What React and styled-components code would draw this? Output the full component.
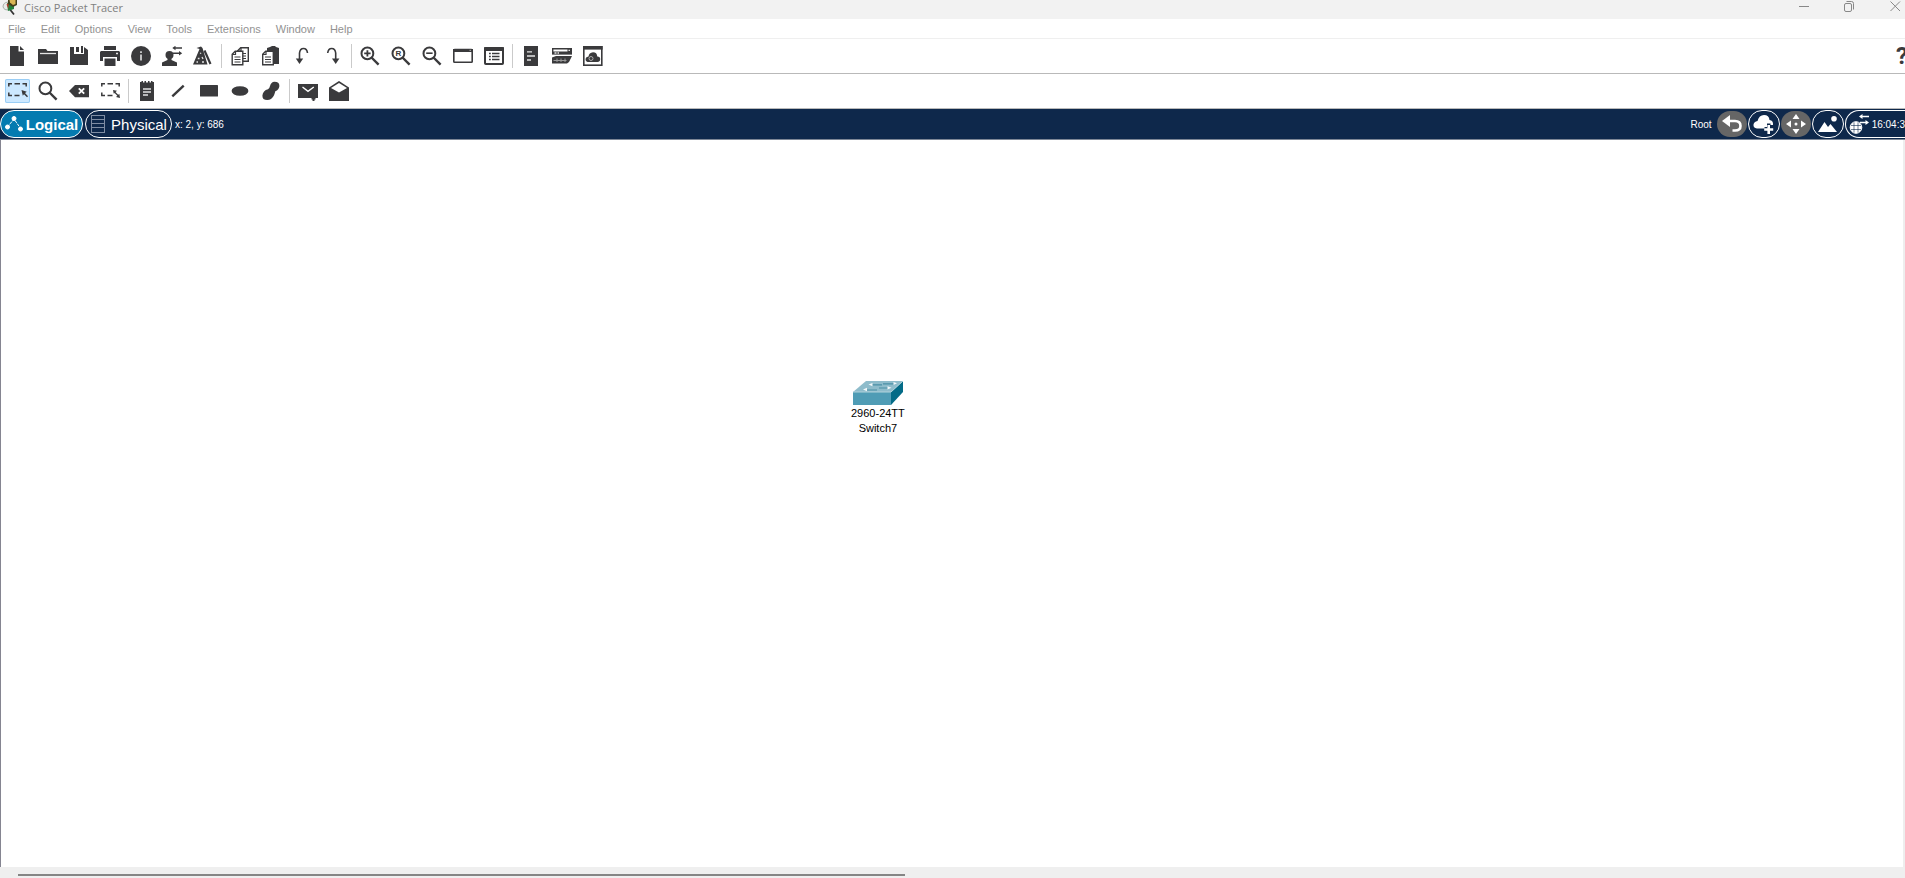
import React from "react";
import styled, { createGlobalStyle, css } from "styled-components";

const INK = "#3a3a3c";
const NAVY = "#0e284b";

const GlobalStyle = createGlobalStyle`
  *, *::before, *::after { box-sizing: border-box; }
  body {
    margin: 0;
    overflow: hidden;
    background: #fff;
    font-family: "Liberation Sans", Arial, sans-serif;
  }
  svg { display: block; flex: none; }
`;

const Window = styled.div`
  display: flex;
  flex-direction: column;
  height: 100vh;
`;

const plainButton = css`
  display: flex;
  align-items: center;
  justify-content: center;
  flex: none;
  padding: 0;
  border: 0;
  background: none;
  font-family: inherit;
`;

const TitleBar = styled.header`
  display: flex;
  justify-content: space-between;
  height: 19px;
  padding: 0 4px 0 2px;
  background: #f2f2f2;
`;

const AppTitle = styled.h1`
  display: flex;
  gap: 6px;
  margin: 0;
  font: 400 11px/16px "Open Sans", sans-serif;
  color: #808080;
`;

const WindowControls = styled.div`
  display: flex;
  gap: 35px;
`;

const WindowButton = styled.button`
  ${plainButton}
  width: 11px;
  height: 13px;
`;

const MenuBar = styled.nav`
  display: flex;
  gap: 15px;
  height: 20px;
  padding-left: 8px;
  border-bottom: 1px solid #efefef;
`;

const MenuButton = styled.button`
  ${plainButton}
  padding-top: 2px;
  font-size: 11px;
  line-height: 17px;
  color: #929292;
`;

const Toolbar = styled.div`
  display: flex;
  align-items: center;
  height: 35px;
  padding-left: 5px;
  border-bottom: 1px solid #b9b9b9;
`;

const ToolGroup = styled.div`
  display: flex;
  gap: 6px;
  padding-right: 5px;
  margin-right: 6px;
  border-right: 1px solid ${(p) => (p.$last ? "transparent" : "#cacaca")};
`;

const ToolButton = styled.button`
  ${plainButton}
  width: 25px;
  height: 24px;
  border-radius: 2px;
  ${(p) => p.$active && css`
    background: #cce8ff;
    box-shadow: inset 0 0 0 1px #99cdf5;
  `}
`;

const HelpButton = styled.button`
  ${plainButton}
  justify-content: flex-start;
  width: 9px;
  margin-left: auto;
  overflow: hidden;
  font: 700 24px/26px Roboto, sans-serif;
  color: ${INK};
`;

const ViewBar = styled.div`
  display: flex;
  align-items: center;
  justify-content: space-between;
  height: 31px;
  border-bottom: 1px solid #7d8796;
  background: ${NAVY};
  color: #fff;
  font-size: 10px;
`;

const ViewGroup = styled.div`
  display: flex;
  align-items: center;
  gap: ${(p) => p.$gap}px;
`;

const ViewTab = styled.button`
  ${plainButton}
  gap: ${(p) => (p.$active ? 3 : 5)}px;
  width: ${(p) => (p.$active ? 83 : 87)}px;
  height: 28px;
  border: 1px solid #fff;
  border-radius: 14px;
  background: ${(p) => (p.$active ? "#047bb0" : NAVY)};
  color: #fff;
  font-size: 15px;
  font-weight: ${(p) => (p.$active ? 700 : 400)};
`;

const Coordinates = styled.span`
  padding-left: 1px;
`;

const Root = styled.span`
  margin-right: 4px;
`;

const RoundButton = styled.button`
  ${plainButton}
  width: ${(p) => (p.$muted ? 30 : 32)}px;
  height: ${(p) => (p.$muted ? 26 : 28)}px;
  border: ${(p) => (p.$muted ? "0" : "1px solid #fff")};
  border-radius: 14px;
  background: ${(p) => (p.$muted ? "#666" : NAVY)};
`;

const ClockButton = styled.button`
  ${plainButton}
  gap: 3px;
  height: 28px;
  padding-left: 3px;
  border: 1px solid #fff;
  border-right: 0;
  border-radius: 14px 0 0 14px;
  color: #fff;
  font-size: 10px;
`;

const Workspace = styled.main`
  position: relative;
  flex: 1;
  border-left: 1px solid #858591;
  border-right: 2px solid #eee;
  background: #fff;
`;

const Device = styled.figure`
  position: absolute;
  left: 850px;
  top: 240px;
  display: flex;
  flex-direction: column;
  align-items: center;
  margin: 0;
`;

const DeviceLabel = styled.figcaption`
  font-size: 11px;
  line-height: 15px;
  text-align: center;
  color: #000;
`;

const ScrollTrack = styled.div`
  flex: none;
  height: 11px;
  padding: 7px 0 0 18px;
  background: #efefef;
`;

const ScrollThumb = styled.div`
  width: 47%;
  height: 2px;
  background: #858585;
`;

const Svg = ({ children, w = 21, h = 20 }) => (
  <svg width={w} height={h} viewBox={`0 0 ${w} ${h}`} fill={INK} aria-hidden="true">
    {children}
  </svg>
);

const line = { fill: "none", stroke: INK, strokeWidth: 2 };
const pale = { fill: "none", stroke: "#e4e4e4", strokeWidth: 1.3 };

const Lens = ({ children }) => (
  <Svg>
    <circle cx="7.4" cy="7.4" r="5.9" {...line} />
    <path d="M11.5 11.5L18.6 18.6" {...line} strokeWidth="2.4" />
    {children}
  </Svg>
);

const Page = ({ x, y }) => (
  <g transform={`translate(${x} ${y})`}>
    <path d="M.7 3.7L3.7.7H11.3V14.3H.7Z" fill="#fff" stroke={INK} strokeWidth="1.4" />
    <path d="M.7 4H4V.7M3 6.5H9M3 9H9M3 11.5H9" fill="none" stroke={INK} strokeWidth="1.2" />
  </g>
);

const DashedFrame = () => (
  <path
    d="M1.8 5.5V2.8H5M7.5 2.8H13M15.5 2.8H19.2V5.5M1.8 11.500V14.500H5M7.5 14.500H12.500"
    {...line}
    strokeWidth="1.5"
  />
);

const icons = {
  New: <Svg><path d="M3 0H11.5V5.5H17V20H3Z" /><path d="M13 0L17 4H13Z" /></Svg>,
  Open: <Svg><path d="M0 3H8L9.5 5H20V18H0Z" /><path d="M2 7.5H18" {...pale} /></Svg>,
  Save: (
    <Svg>
      <path d="M1 1H5V8H15V1L19 4V19H1Z" />
      <path d="M7 1H10V6H7ZM12 0H14V7H12Z" />
    </Svg>
  ),
  Print: (
    <Svg>
      <path d="M4 0H16V4H4ZM1 5H19L20 6V15H17V11H3V15H0V6ZM4.5 12.5H15.5V20H4.5Z" />
      <path d="M16 7.5H18" {...pale} />
    </Svg>
  ),
  Info: (
    <Svg>
      <circle cx="10" cy="10" r="10" />
      <path d="M10 5.2V7M10 8.4V14.5" {...pale} strokeWidth="1.6" />
    </Svg>
  ),
  "User profile": (
    <Svg>
      <circle cx="7.5" cy="9" r="4" />
      <path d="M5.5 11H9.5V14L15 16.5V20H0V16.5L5.5 14Z" />
      <path d="M12 2H20M11 7.3H18" {...line} strokeWidth="1.4" />
      <path d="M10.3 2L13.5-.3V4.3ZM20.2 7.3L17 5V9.6Z" />
    </Svg>
  ),
  Activity: (
    <Svg>
      <path d="M3.500 2L8 .5L9.500 2L14.500 18.500H0L6.500 3Z" />
      <path d="M11.500 4.500L17.500 18" {...line} strokeWidth="2.2" />
      <path d="M7 7.500L8.200 7M4.800 12.500H6.500M9 11L10 13M3.500 16H5M9 16H11" {...pale} />
    </Svg>
  ),
  Copy: <Svg><Page x={7} y={1} /><Page x={1.5} y={4.5} /></Svg>,
  Paste: (
    <Svg>
      <path d="M6 2L9 1L11 0H14L15 1L18 2V18H6Z" />
      <Page x={1} y={4.5} />
    </Svg>
  ),
  Undo: <Svg><path d="M7.5 14V7Q8 2.5 11.5 2.5Q15 2.5 15.5 7" {...line} strokeWidth="1.6" /><path d="M3.8 12.5H11.2L7.5 18Z" /></Svg>,
  Redo: <Svg><path d="M12.7 14V7Q12.2 2.5 8.7 2.5Q5.2 2.5 4.7 7" {...line} strokeWidth="1.6" /><path d="M9 12.5H16.4L12.7 18Z" /></Svg>,
  "Zoom in": <Lens><path d="M4.2 7.4H10.6M7.4 4.2V10.6" {...line} strokeWidth="1.8" /></Lens>,
  "Zoom reset": <Lens><text x="4.5" y="10.4" fontSize="8" fontWeight="700">R</text></Lens>,
  "Zoom out": <Lens><path d="M4.2 7.2H10.6" {...line} strokeWidth="1.6" /></Lens>,
  "Viewport": (
    <Svg>
      <rect x=".8" y="3.6" width="18.4" height="12.6" rx=".8" {...line} strokeWidth="1.6" />
      <path d="M0 3H20V6H0Z" /><path d="M16.5 4.4H18" {...pale} stroke="#999" />
    </Svg>
  ),
  "Object list": (
    <Svg>
      <rect x="1" y="2" width="18" height="16" rx=".8" {...line} />
      <path d="M0 1.2H20V5H0Z" />
      <path d="M5 7.5H6.8M8 7.5H15.5M5 10.5H6.8M8 10.5H15.5M5 13.5H6.8M8 13.5H15.5" {...line} strokeWidth="1.4" />
    </Svg>
  ),
  "Command log": <Svg><path d="M3 0H17V20H3Z" /><path d="M6 5.8H11M6 10H14M6 14H10" {...pale} /></Svg>,
  "Custom devices": (
    <Svg>
      <path d="M.7 2.7H19.3V7.5H.7Z" fill="#fff" stroke={INK} strokeWidth="1.4" />
      <path d="M0 5.5H20V8.5H0ZM15.5 2H20V8.5H15.5ZM0 11.5L4 10H20L17 16L15 17.5H0Z" />
      <path d="M2.5 7H4.5M5.5 7H7M16.5 4.3H18" {...pale} />
      <path d="M1.5 14.5H14.5M5 12.5V16M9 12.5V16M13 12.5V16" {...pale} stroke="#999" strokeWidth="1" />
    </Svg>
  ),
  "Cloud services": (
    <Svg>
      <rect x=".8" y=".8" width="18" height="18.4" {...line} strokeWidth="1.6" />
      <path d="M0 0H19.6V3.6H0Z" />
      <path d="M4.5 16Q2.4 15.5 2.5 13Q2.8 10.7 5.5 10.5Q6 6.5 10 6.2Q14 6.2 14.3 10.5Q17.3 10.5 17.2 13.3Q17 16 14.5 16Z" />
      <circle cx="8" cy="12.5" r="2" {...pale} stroke="#aaa" strokeWidth="1" />
    </Svg>
  ),
  Select: (
    <Svg>
      <DashedFrame />
      <path d="M14.500 9L19.800 10.800L18 12L21 15.300L20 16.200L17 13.200L15.800 14.800Z" />
    </Svg>
  ),
  Inspect: <Lens />,
  Delete: (
    <Svg>
      <path d="M0 10L6 4H20V16.3H6Z" />
      <path d="M9.8 7.3L15.2 12.7M15.2 7.3L9.8 12.7" fill="none" stroke="#fff" strokeWidth="1.8" />
    </Svg>
  ),
  Resize: (
    <Svg>
      <DashedFrame />
      <path d="M14 10.500L18.500 15" {...line} strokeWidth="1.3" />
      <path d="M13 9L17 9.800L13.800 12.800ZM20 17L16 16L19.300 12.800Z" />
    </Svg>
  ),
  Note: (
    <Svg>
      <path d="M3 1H4.500V0H6V1.500H7.500V0H9V1.500H11V0H12.500V1.500H14V0H15.500V1H17V20H3Z" />
      <path d="M6 8H14M6 11H14M6 14H11" {...pale} />
    </Svg>
  ),
  Line: <Svg><path d="M4.3 15.3L15.7 4.7" {...line} strokeWidth="2.4" /></Svg>,
  Rectangle: <Svg><rect x="1" y="4" width="18" height="11.5" rx=".6" /></Svg>,
  Ellipse: <Svg><ellipse cx="10" cy="10" rx="8.4" ry="4.8" /></Svg>,
  Freeform: (
    <Svg>
      <path d="M13.5.8Q18.4.8 18.4 5Q18 9 14.3 10.3C13.5 13 12.5 18.8 6.2 19Q1.2 19 1.4 14.5Q2 9.5 7 8.3Q8.5 7.5 9 5Q10 1 13.5.8Z" />
    </Svg>
  ),
  "Simple PDU": (
    <Svg>
      <path d="M0 3H20V17H17.500V18.500H16.500V20H14.500V18.500H13.500V17H0Z" />
      <path d="M4.5 6L10 10.3L15.8 6" fill="none" stroke="#fff" strokeWidth="1.4" />
    </Svg>
  ),
  "Complex PDU": (
    <Svg>
      <path d="M0 6.5L10 0L20 6.5V20H0Z" />
      <path d="M2 7L10 2L18 7L10 11.5Z" fill="#fff" />
    </Svg>
  ),
};

const mainTools = [
  ["New", "Open", "Save", "Print", "Info", "User profile", "Activity"],
  ["Copy", "Paste", "Undo", "Redo"],
  ["Zoom in", "Zoom reset", "Zoom out", "Viewport", "Object list"],
  ["Command log", "Custom devices", "Cloud services"],
];

const drawTools = [
  ["Select", "Inspect", "Delete", "Resize"],
  ["Note", "Line", "Rectangle", "Ellipse", "Freeform"],
  ["Simple PDU", "Complex PDU"],
];

const menus = ["File", "Edit", "Options", "View", "Tools", "Extensions", "Window", "Help"];

const ToolGroups = ({ groups, active }) =>
  groups.map((names, i) => (
    <ToolGroup key={names[0]} $last={i === groups.length - 1}>
      {names.map((name) => (
        <ToolButton key={name} type="button" aria-label={name} $active={name === active}>
          {icons[name]}
        </ToolButton>
      ))}
    </ToolGroup>
  ));

const AppLogo = () => (
  <svg width="16" height="16" viewBox="0 0 16 16" aria-hidden="true">
    <path d="M6 2Q1 2.500 1 7Q2 10.500 6 10" fill="#e8ebe8" stroke="#a9b0a9" />
    <path d="M8 9.500L12 14.500" stroke="#333" strokeWidth="1.8" />
    <path d="M5 3L12 4V9L6 11Z" fill="#22823c" />
    <path d="M4.5 4.5L6.5 3V9Z" fill="#c2352c" />
    <path d="M6 0H15V5L11 7L6 4Z" fill="#44401d" />
    <path d="M7.5 0H13.500V4L11 5L8 2.500Z" fill="#d9b655" />
  </svg>
);

const SwitchDevice = () => (
  <svg width="50" height="26" viewBox="0 0 50 26" aria-hidden="true">
    <path d="M0 12L13 1H50L38 12Z" fill="#8ebccb" />
    <path d="M0 12H38V25H0Z" fill="#4f9cb5" />
    <path d="M38 12L50 1V12L38 25Z" fill="#036b87" />
    <path d="M0 12H38L50 1" fill="none" stroke="#b2d3dc" />
    <g fill="none" stroke="#4b8fa6" strokeWidth="1.2">
      <path d="M19 4.800H29M30 3.800H41M13 10H24M26 8H35" />
    </g>
    <g fill="#f2f8fa">
      <path d="M15.500 4.500L19.500 3V6.200ZM44 3.300L40.500 2V5ZM10 9.500L14 7.800V11.300ZM38.500 7.800L34.500 6.200V9.500Z" />
    </g>
  </svg>
);

export default function App() {
  return (
    <Window>
      <GlobalStyle />
      <TitleBar>
        <AppTitle><AppLogo />Cisco Packet Tracer</AppTitle>
        <WindowControls>
          <WindowButton type="button" aria-label="Minimize">
            <svg width="11" height="11" fill="none" stroke="#888"><path d="M1 5.5H11" /></svg>
          </WindowButton>
          <WindowButton type="button" aria-label="Restore">
            <svg width="11" height="11" fill="none" stroke="#888">
              <rect x=".5" y="2.5" width="7" height="8" rx="1.5" />
              <path d="M2.5 .5H7.5Q9.5 .5 9.5 2.5V8.5" />
            </svg>
          </WindowButton>
          <WindowButton type="button" aria-label="Close">
            <svg width="11" height="11" fill="none" stroke="#888"><path d="M.5 .5L10 10M10 .5L.5 10" /></svg>
          </WindowButton>
        </WindowControls>
      </TitleBar>

      <MenuBar>
        {menus.map((name) => <MenuButton key={name} type="button">{name}</MenuButton>)}
      </MenuBar>

      <Toolbar>
        <ToolGroups groups={mainTools} />
        <HelpButton type="button" aria-label="Help">?</HelpButton>
      </Toolbar>
      <Toolbar>
        <ToolGroups groups={drawTools} active="Select" />
      </Toolbar>

      <ViewBar>
        <ViewGroup $gap={2}>
          <ViewTab type="button" $active>
            <svg width="18" height="18" fill="#fff" stroke="#fff" aria-hidden="true">
              <path d="M2.500 12L9 4L16 14" fill="none" strokeDasharray="3 1" />
              <circle cx="2.500" cy="12" r="2" /><circle cx="9" cy="3.500" r="2" /><circle cx="15.500" cy="14" r="2" />
            </svg>
            Logical
          </ViewTab>
          <ViewTab type="button">
            <svg width="16" height="18" fill="none" stroke="#7f8da3" aria-hidden="true">
              <path d="M1.5 0V18M14.5 0V18M1.5 .5H14.5M1.5 4.5H14.5M1.5 8.5H14.5M1.5 12.5H14.5M1.5 17.5H14.5" />
            </svg>
            Physical
          </ViewTab>
          <Coordinates>x: 2, y: 686</Coordinates>
        </ViewGroup>
        <ViewGroup $gap={1}>
          <Root>Root</Root>
          <RoundButton type="button" aria-label="Back" $muted>
            <svg width="20" height="18" fill="none" stroke="#fff" strokeWidth="2.6" aria-hidden="true">
              <path d="M4 6H13Q18.500 6 18.500 11Q18.500 15.500 13 15.500H10.500" />
              <path d="M0 6L8 0V12Z" fill="#fff" stroke="none" />
            </svg>
          </RoundButton>
          <RoundButton type="button" aria-label="New cluster">
            <svg width="22" height="20" fill="#fff" aria-hidden="true">
              <path d="M4 14.500Q0 14 .5 10.500Q1 7.500 4.500 7Q6 1 11 1Q16 1 16.500 6Q20.500 6.500 20 11L17.500 11V9.500H14V13H11.500V14.500Z" />
              <path d="M15.700 11V20M11.200 15.500H20.200" stroke="#fff" strokeWidth="2.6" />
            </svg>
          </RoundButton>
          <RoundButton type="button" aria-label="Move object" $muted>
            <svg width="20" height="20" fill="#fff" aria-hidden="true">
              <path d="M10 0L13.500 5H6.500ZM10 20L13.500 15H6.500ZM0 10L5 6.500V13.500ZM20 10L15 6.500V13.500Z" />
              <circle cx="10" cy="10" r="1.5" />
            </svg>
          </RoundButton>
          <RoundButton type="button" aria-label="Set background">
            <svg width="20" height="16" fill="#fff" aria-hidden="true">
              <path d="M0 16L6.500 6L10 11L12.500 8L19 16Z" />
              <circle cx="16" cy="2.800" r="2.8" />
            </svg>
          </RoundButton>
          <ClockButton type="button">
            <svg width="20" height="20" fill="none" stroke="#fff" aria-hidden="true">
              <circle cx="7" cy="13.500" r="5.8" fill="#fff" />
              <path d="M2 11.500H12M2 15.500H12M5 8.500V18.500M9 8.500V18.500" stroke={NAVY} strokeWidth=".6" />
              <path d="M12 2.500H20M11 8.500H18" strokeWidth="1.6" />
              <path d="M10 2.500L13.500 0V5ZM20 8.500L16.500 6V11Z" fill="#fff" stroke="none" />
            </svg>
            16:04:3
          </ClockButton>
        </ViewGroup>
      </ViewBar>

      <Workspace>
        <Device>
          <SwitchDevice />
          <DeviceLabel>2960-24TT<br />Switch7</DeviceLabel>
        </Device>
      </Workspace>
      <ScrollTrack>
        <ScrollThumb />
      </ScrollTrack>
    </Window>
  );
}
